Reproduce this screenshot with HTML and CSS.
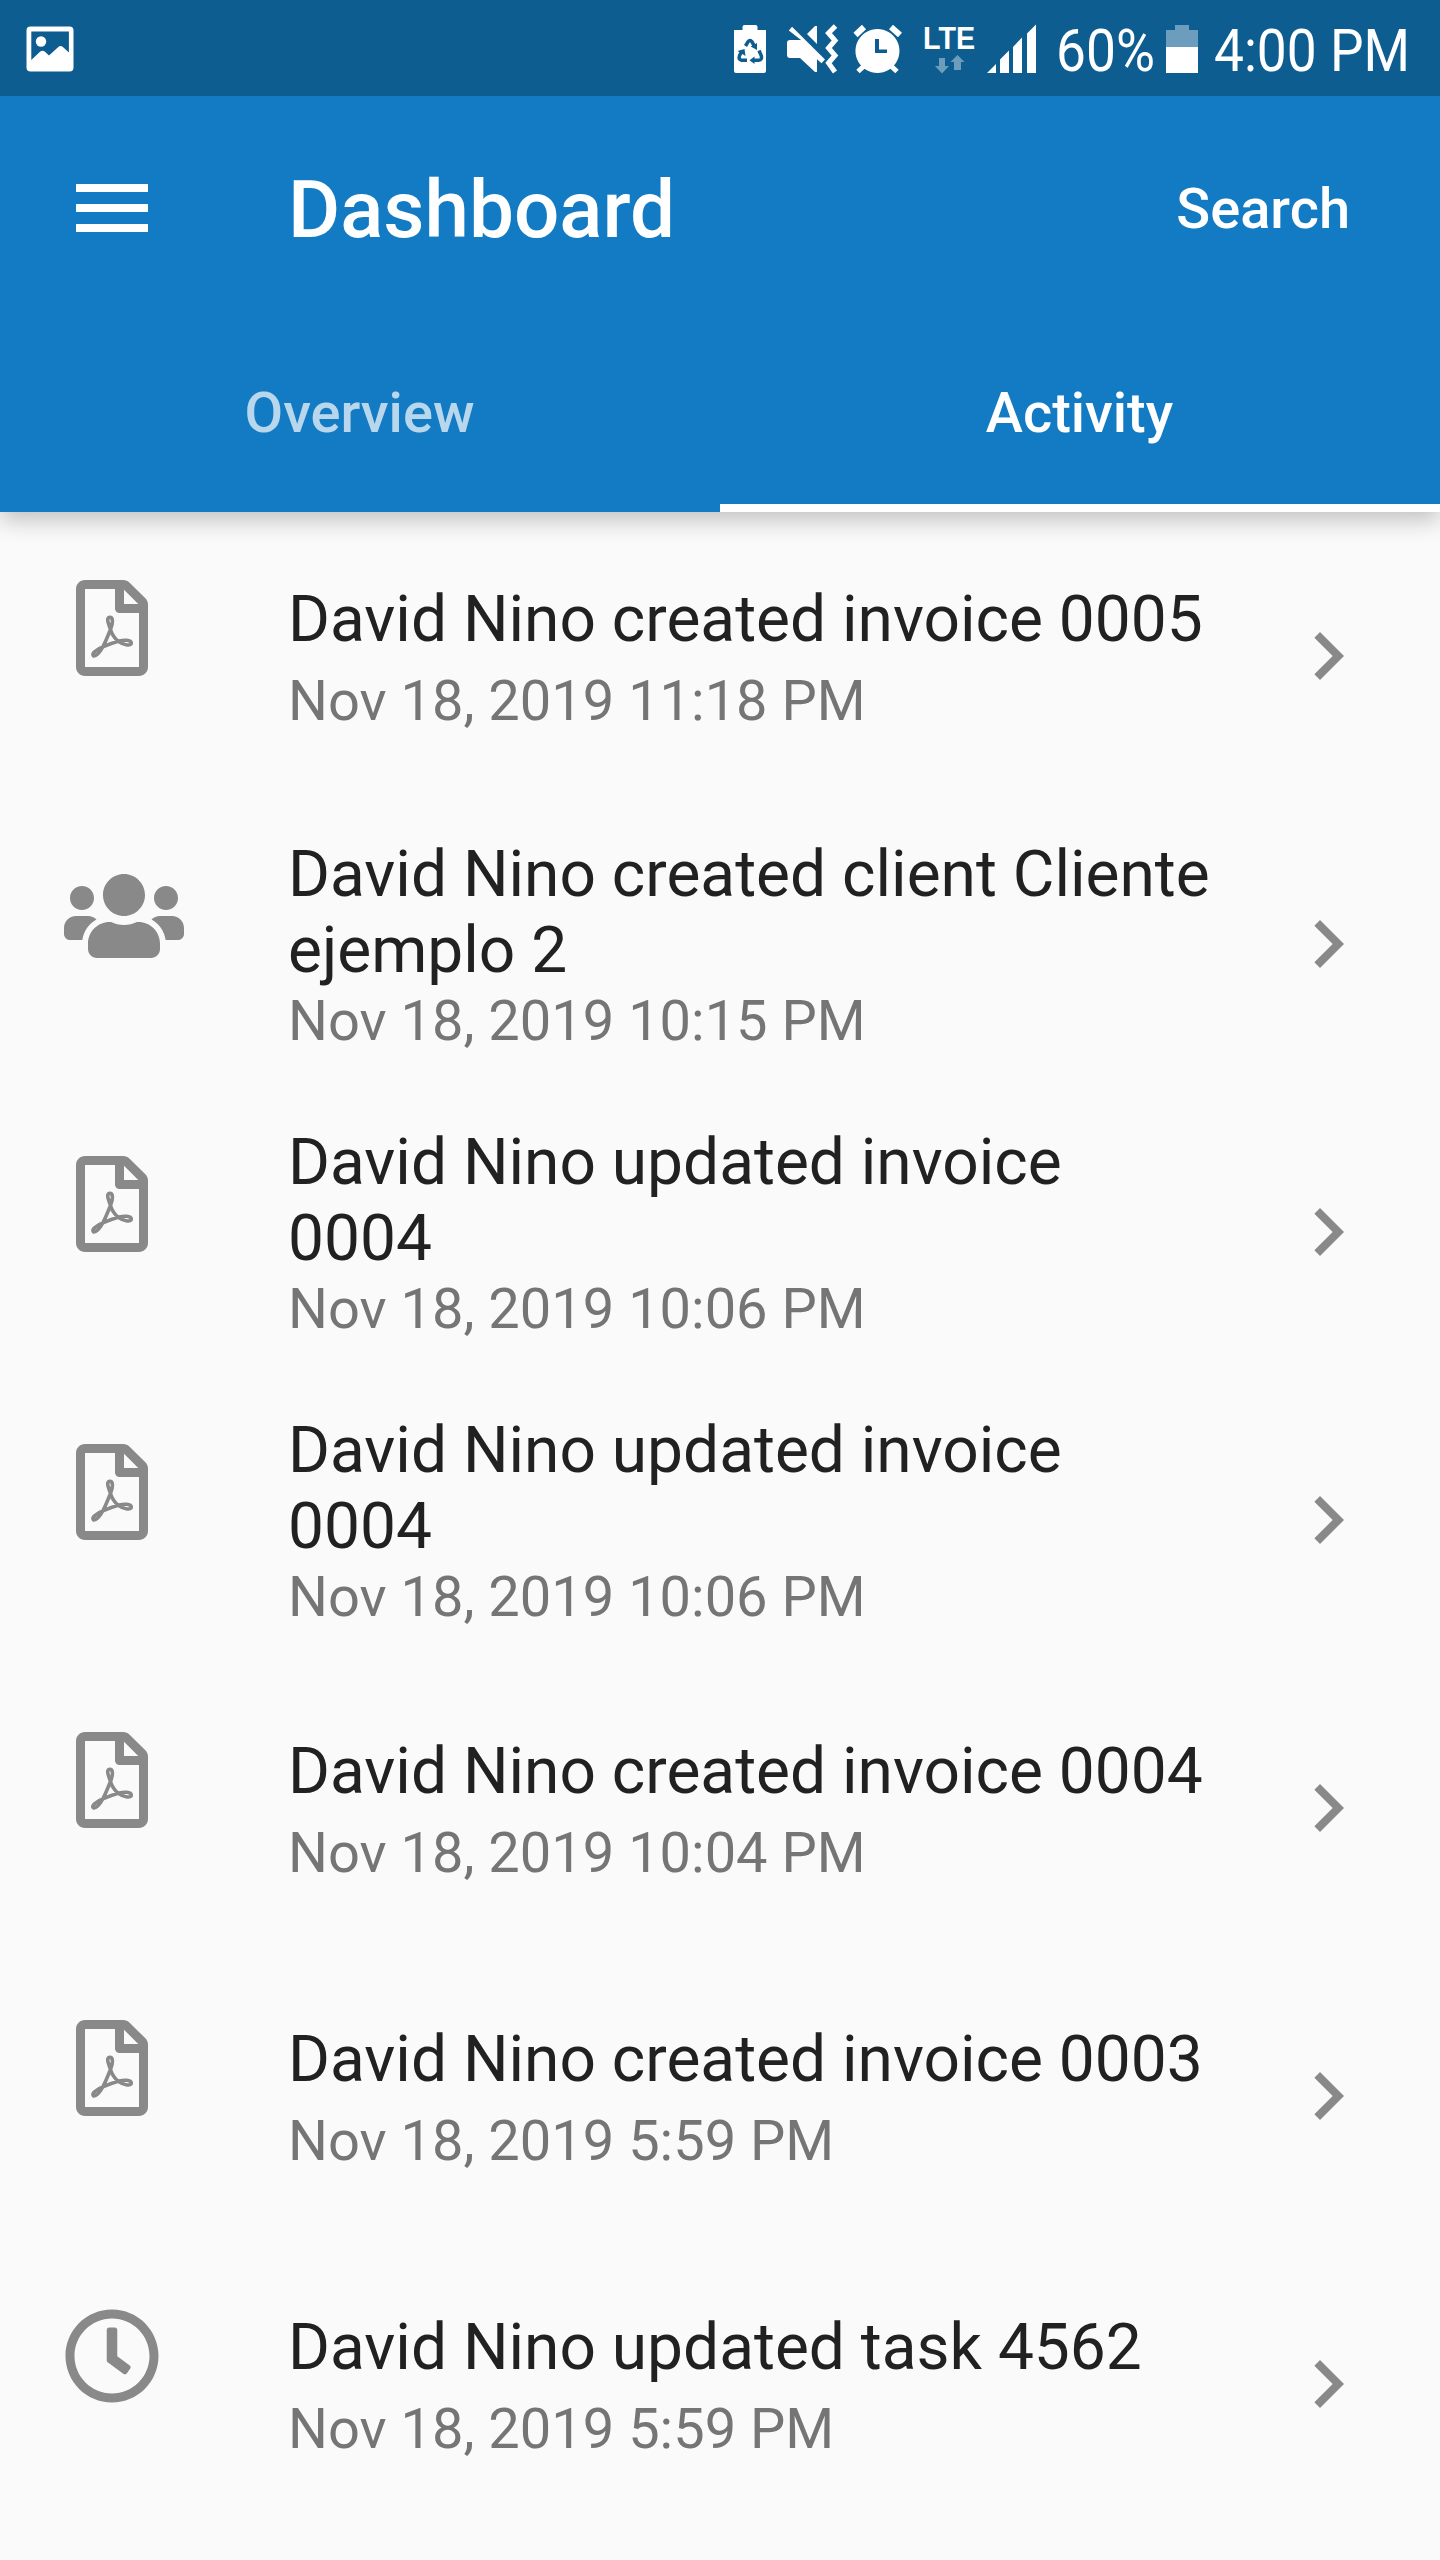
FILE: index.html
```html
<!DOCTYPE html>
<html lang="en">
<head>
<meta charset="utf-8">
<title>Dashboard</title>
<link rel="stylesheet" href="styles.css">
</head>
<body>
<svg class="defs" aria-hidden="true">
  <symbol id="pdf" viewBox="0 0 384 512">
    <path d="M369.900 97.900L286 14C277 5 264.800 0 252.100 0H48C21.500 0 0 21.500 0 48v416c0 26.500 21.500 48 48 48h288c26.500 0 48-21.500 48-48V131.900c0-12.700-5.100-25-14.100-34zM332.100 128H256V51.900l76.100 76.100zM48 464V48h160v104c0 13.300 10.700 24 24 24h104v288H48z"/>
    <path class="loop" d="M184 264C170 225 161 200 180 199C199 199 198 230 184 264C172 292 160 325 143 357C126 388 104 412 92 404C81 394 108 370 143 357C170 345 200 334 226 327C255 319 293 318 295 336C296 353 255 349 226 327C205 312 192 290 184 264Z"/>
  </symbol>
  <symbol id="users" viewBox="0 0 640 512">
    <path d="M96 224c35.300 0 64-28.700 64-64s-28.700-64-64-64-64 28.700-64 64 28.700 64 64 64zm448 0c35.300 0 64-28.700 64-64s-28.700-64-64-64-64 28.700-64 64 28.700 64 64 64zm32 32h-64c-17.600 0-33.500 7.100-45.100 18.600 40.300 22.100 68.900 62 75.100 109.400h66c17.700 0 32-14.300 32-32v-32c0-35.300-28.700-64-64-64zm-256 0c61.900 0 112-50.100 112-112S381.900 32 320 32 208 82.100 208 144s50.100 112 112 112zm76.800 32h-8.300c-20.800 10-43.900 16-68.500 16s-47.600-6-68.500-16h-8.300C179.600 288 128 339.600 128 403.200V432c0 26.500 21.500 48 48 48h288c26.500 0 48-21.500 48-48v-28.800c0-63.600-51.600-115.200-115.200-115.200zm-223.700-13.400C161.500 263.100 145.600 256 128 256H64c-35.300 0-64 28.700-64 64v32c0 17.700 14.300 32 32 32h65.900c6.300-47.400 34.900-87.300 75.200-109.400z"/>
  </symbol>
  <symbol id="clock" viewBox="0 0 512 512">
    <path d="M256 8C119 8 8 119 8 256s111 248 248 248 248-111 248-248S393 8 256 8zm0 448c-110.500 0-200-89.500-200-200S145.500 56 256 56s200 89.500 200 200-89.500 200-200 200zm61.800-104.400l-84.900-61.700c-3.100-2.300-4.900-5.900-4.900-9.700V116c0-6.600 5.400-12 12-12h32c6.600 0 12 5.400 12 12v141.700l66.800 48.600c5.400 3.900 6.500 11.400 2.600 16.800L334.600 349c-3.900 5.300-11.400 6.500-16.800 2.600z"/>
  </symbol>
  <symbol id="chevron" viewBox="0 0 96 96">
    <path d="M34.360 66.360 52.680 48 34.360 29.640 40 24l24 24-24 24z"/>
  </symbol>
</svg>

<header class="app-header">
  <div class="status-bar">
    <svg class="status-photo" viewBox="0 0 48 46"><path fill-rule="evenodd" d="M4.500.5h39a4 4 0 0 1 4 4v37a4 4 0 0 1-4 4h-39a4 4 0 0 1-4-4v-37a4 4 0 0 1 4-4zM5.300 5.500V34L14 25.800q2.500-2 5 0l4 3.800 9.300-8.600q2.200-2 4.600 0l6 5.600V5.500z"/><circle cx="15" cy="15.500" r="5.200"/></svg>
    <svg class="status-icons" viewBox="0 0 320 96">
      <path d="M14 30h8.500v-3q0-2 2-2h11q2 0 2 2v3H46v41q0 2-2 2H16q-2 0-2-2z"/>
      <path class="recycle" d="M25.500 46l2.500-4.200q2-2.600 4 0l2.200 4M39 50.500l2.300 5.200q1 4.300-2.500 4.500H33.500M27 60.200h-5.500q-3.300-.5-2-4.500l2.300-4.500"/>
      <path class="recycle-tips" d="M37 43v7l-6.300-3.500zM34.500 56.500v7.400l-5-3.700zM17.500 51l7-2 1 7z"/>
      <path d="M70 40h11L68.800 30.500l3.200-3.700L105 59.500l-3.500 3.700-4.500-4V72h-2L80 58H70q-3 0-3-3V43q0-3 3-3zM87 34l8-8h2v18z"/>
      <path class="wave" d="M115.500 26l-7 7 6.500 7.500-6.500 7.500 6.500 7.500-6.500 7.500 6.500 9"/>
      <path fill-rule="evenodd" d="M157.500 29a22 22 0 1 1-.1 0zM155 39v14h12v-3.500h-8V39z"/>
      <path class="bell" d="M135.500 35l8.500-8M171 27l9 8"/>
      <path class="leg" d="M144 66l-6 5.500M171 66l6 5.500"/>
      <text class="lte" x="203" y="49.300" textLength="52" lengthAdjust="spacingAndGlyphs">LTE</text>
      <path class="dim" d="M219 58h6v8h4l-7 7.500-7-7.500h4zM234 70h7v-8h3.500L237.500 55l-7 7h3.500z"/>
      <path d="M267 73l9-9v9zM280 73V59.500l9-9V73zM293 73V47l9-9.500V73zM307 73V33.500l9-9V73z"/>
    </svg>
    <span class="percent">60%</span>
    <svg class="battery" viewBox="0 0 32 48"><path class="dim" d="M0 5h9V0h14v5h9v17H0z"/><path d="M0 22h32v26H0z"/></svg>
    <span class="time">4:00 PM</span>
  </div>
  <div class="toolbar">
    <svg class="menu" viewBox="0 0 72 48"><path d="M0 0h72v8H0zM0 20h72v8H0zM0 40h72v8H0z"/></svg>
    <h1 class="title">Dashboard</h1>
    <span class="search">Search</span>
  </div>
  <nav class="tabs">
    <span class="tab">Overview</span>
    <span class="tab tab-active">Activity</span>
  </nav>
</header>

<main class="list">
  <div class="row"><svg class="icon"><use href="#pdf"/></svg><div class="text"><div class="name">David Nino created invoice 0005</div><div class="date">Nov 18, 2019 11:18 PM</div></div><svg class="chevron"><use href="#chevron"/></svg></div>
  <div class="row two-line"><svg class="icon icon-wide"><use href="#users"/></svg><div class="text"><div class="name">David Nino created client Cliente ejemplo 2</div><div class="date">Nov 18, 2019 10:15 PM</div></div><svg class="chevron"><use href="#chevron"/></svg></div>
  <div class="row two-line"><svg class="icon"><use href="#pdf"/></svg><div class="text"><div class="name">David Nino updated invoice 0004</div><div class="date">Nov 18, 2019 10:06 PM</div></div><svg class="chevron"><use href="#chevron"/></svg></div>
  <div class="row two-line"><svg class="icon"><use href="#pdf"/></svg><div class="text"><div class="name">David Nino updated invoice 0004</div><div class="date">Nov 18, 2019 10:06 PM</div></div><svg class="chevron"><use href="#chevron"/></svg></div>
  <div class="row"><svg class="icon"><use href="#pdf"/></svg><div class="text"><div class="name">David Nino created invoice 0004</div><div class="date">Nov 18, 2019 10:04 PM</div></div><svg class="chevron"><use href="#chevron"/></svg></div>
  <div class="row"><svg class="icon"><use href="#pdf"/></svg><div class="text"><div class="name">David Nino created invoice 0003</div><div class="date">Nov 18, 2019 5:59 PM</div></div><svg class="chevron"><use href="#chevron"/></svg></div>
  <div class="row"><svg class="icon"><use href="#clock"/></svg><div class="text"><div class="name">David Nino updated task 4562</div><div class="date">Nov 18, 2019 5:59 PM</div></div><svg class="chevron"><use href="#chevron"/></svg></div>
</main>
</body>
</html>
```

FILE: styles.css
```css
* { box-sizing: border-box; }
body {
  margin: 0;
  height: 2560px;
  overflow: hidden;
  background: #fafafa;
  color: #212121;
  font-family: Roboto, sans-serif;
}
svg { display: block; flex: none; fill: currentColor; }
.defs { position: absolute; width: 0; height: 0; }

.app-header {
  height: 512px;
  background: #127bc3;
  color: #fff;
  box-shadow: 0 8px 22px rgba(0,0,0,.23);
}
.status-bar { display: flex; height: 96px; background: #0d5d91; }
.status-photo { width: 48px; height: 46px; margin: 25.500px 0 0 26px; }
.status-icons { width: 320px; height: 96px; margin-left: 646px; }
.recycle { fill: none; stroke: #0d5d91; stroke-width: 3.500; }
.recycle-tips { fill: #0d5d91; }
.wave { fill: none; stroke: #fff; stroke-width: 5; }
.bell { fill: none; stroke: #fff; stroke-width: 6; }
.leg { fill: none; stroke: #fff; stroke-width: 5; }
.lte { font: 700 32px "Liberation Sans", sans-serif; }
.dim { opacity: .4; }
.percent, .time {
  font-size: 60px;
  line-height: 96px;
  white-space: nowrap;
  transform: scaleX(.888);
  transform-origin: 0 50%;
  padding-top: 3px;
}
.percent { width: 110px; margin-left: 16px; }
.battery { width: 32px; height: 48px; margin-top: 25px; }
.time { width: 210px; margin-left: 16px; }

.toolbar { display: flex; align-items: center; height: 224px; padding: 0 90px 0 76px; }
.menu { width: 72px; height: 48px; }
.title { flex: 1; margin: 0 0 0 140px; padding-top: 4px; font-size: 80px; font-weight: 500; line-height: 94px; }
.search { padding-top: 2px; font-size: 56px; font-weight: 500; }
.tabs { display: flex; height: 192px; }
.tab {
  flex: 0 0 50%;
  display: flex;
  align-items: center;
  justify-content: center;
  padding: 2px 1px 0 0;
  border-bottom: 8px solid transparent;
  font-size: 56px;
  font-weight: 500;
  color: rgba(255,255,255,.7);
}
.tab-active { color: #fff; border-color: #fff; }

.row { display: flex; height: 288px; padding: 0 64px; }
.icon { width: 96px; height: 96px; margin: 68px 128px 0 0; color: #898989; }
.icon-wide { width: 120px; margin-right: 104px; }
.loop { fill: none; stroke: currentColor; stroke-width: 19; stroke-linejoin: round; }
.text { width: 928px; padding-top: 70px; }
.name { font-size: 64px; line-height: 76px; }
.date { font-size: 56px; line-height: 66px; margin-top: 10px; color: #757575; }
.two-line .text { padding-top: 37px; }
.two-line .date { margin-top: -1px; }
.chevron { width: 96px; height: 96px; margin: 96px 0 0 64px; color: #898989; }
```
